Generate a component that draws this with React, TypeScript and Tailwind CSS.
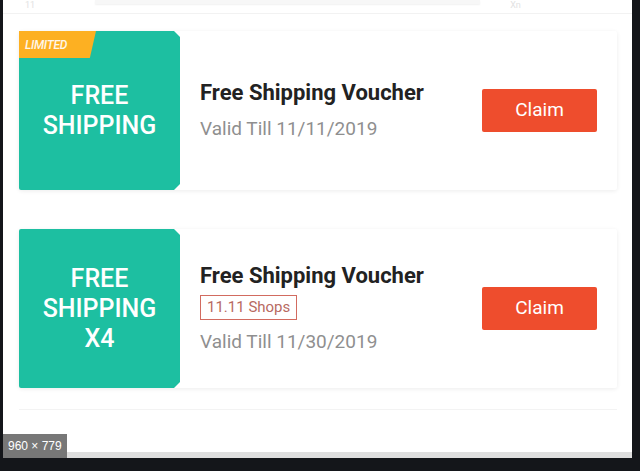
import React from 'react';

interface Voucher {
  id: string;
  label: string[];
  limited?: boolean;
  tag?: string;
  validTill: string;
}

const vouchers: Voucher[] = [
  { id: 'v1', label: ['FREE', 'SHIPPING'], limited: true, validTill: '11/11/2019' },
  { id: 'v2', label: ['FREE', 'SHIPPING', 'X4'], tag: '11.11 Shops', validTill: '11/30/2019' },
];

function VoucherCard({ v }: { v: Voucher }) {
  return (
    <div className="flex h-[159px] w-[598px] bg-white shadow-[0_1px_4px_rgba(0,0,0,0.08)] rounded-[2px]">
      <div className="relative w-[161px] shrink-0 bg-[#1dbfa1] rounded-l-[2px] flex flex-col items-center justify-center [clip-path:polygon(0_0,calc(100%-6px)_0,100%_6px,100%_calc(100%-6px),calc(100%-6px)_100%,0_100%)]">
        {v.limited && (
          <div className="absolute left-0 top-0 h-[27px] w-[77px] bg-[#fdb022] flex items-center pl-[6px] [clip-path:polygon(0_0,100%_0,92%_100%,0_100%)]">
            <span className="text-[12px] italic font-medium text-white/90 tracking-tight">LIMITED</span>
          </div>
        )}
        {v.label.map(line => (
          <span key={line} className="text-[25px] leading-[30px] font-medium text-white">{line}</span>
        ))}
      </div>
      <div className="flex flex-1 items-center justify-between pl-[20px] pr-[20px]">
        <div className="flex flex-col">
          <span className="text-[22px] leading-[26px] font-bold text-[#222]">Free Shipping Voucher</span>
          {v.tag && (
            <span className="mt-[6px] self-start h-[25px] px-[6px] border border-[#d26b60] text-[15px] leading-[23px] text-[#b86a62]">{v.tag}</span>
          )}
          <span className={`${v.tag ? 'mt-[10px]' : 'mt-[11px]'} text-[19px] leading-[24px] text-[#8f8f8f]`}>Valid Till {v.validTill}</span>
        </div>
        <button className="w-[115px] h-[43px] bg-[#ee4d2d] text-white text-[19px] rounded-[2px]">Claim</button>
      </div>
    </div>
  );
}

export default function App() {
  return (
    <div className="h-[471px] w-[640px] bg-[#14161a] flex flex-col overflow-hidden" style={{ fontFamily: 'Roboto, "Liberation Sans", sans-serif' }}>
      <div className="relative ml-[3px] w-[629px] h-[458px] bg-white flex flex-col">
        <div className="h-[14px] flex items-start border-b border-[#f2f2f2]">
          <span className="ml-[22px] text-[9px] leading-[10px] text-[#e2e2e2]">11</span>
          <div className="ml-[60px] w-[385px] h-[4px] bg-[#f7f7f7] shadow-[0_1px_2px_rgba(0,0,0,0.06)]"></div>
          <span className="ml-[30px] text-[9px] leading-[10px] text-[#e2e2e2]">Xn</span>
        </div>
        <div className="flex flex-col gap-[39px] pl-[16px] pt-[17px]">
          {vouchers.map(v => <VoucherCard key={v.id} v={v} />)}
        </div>
        <div className="mt-[21px] ml-[16px] w-[598px] h-[1px] bg-[#f3f3f3]"></div>
        <div className="mt-auto h-[6px] bg-[#dedede]"></div>
        <div className="absolute left-0 bottom-0 h-[24px] px-[5px] bg-[#777] flex items-center">
          <span className="text-[12px] text-white" style={{ fontFamily: '"Liberation Sans", sans-serif' }}>960 × 779</span>
        </div>
      </div>
    </div>
  );
}
